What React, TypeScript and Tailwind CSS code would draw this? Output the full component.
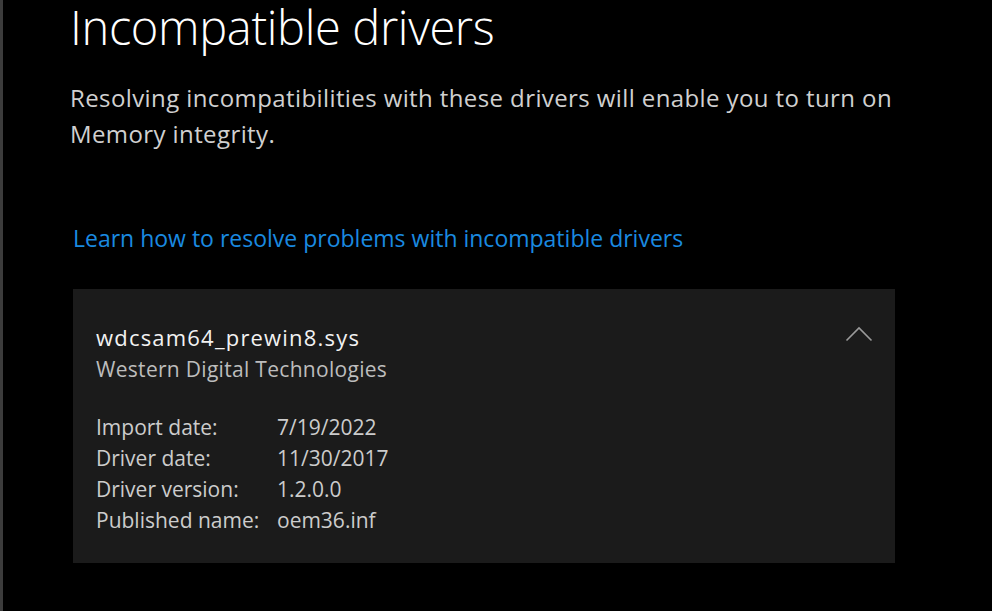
import React from "react";

const font = { fontFamily: '"Open Sans", "Noto Sans", sans-serif' };

function Row({ label, value }: { label: string; value: string }) {
  return (
    <div className="flex h-[31px] leading-[31px]">
      <div className="w-[181px] shrink-0">{label}</div>
      <div>{value}</div>
    </div>
  );
}

export default function App() {
  return (
    <div
      className="w-[992px] h-[611px] bg-black flex overflow-hidden"
      style={font}
    >
      <div className="w-[3px] shrink-0 bg-[#3c3c3c]" />
      <div className="flex flex-col pl-[67px] w-full">
        <h1 className="text-[47px] leading-[54px] tracking-[-0.35px] text-white font-light">
          Incompatible drivers
        </h1>
        <p className="mt-[26px] w-[860px] text-[24px] leading-[36px] tracking-[0.4px] text-[#d0d0d0]">
          Resolving incompatibilities with these drivers will enable you to turn
          on
          <br />
          Memory integrity.
        </p>
        <a className="mt-[71px] ml-[3px] text-[23px] leading-[30px] text-[#1a8ae0] cursor-pointer">
          Learn how to resolve problems with incompatible drivers
        </a>
        <div className="relative mt-[36px] ml-[3px] w-[822px] h-[274px] bg-[#1b1b1b] pl-[23px] pt-[33px]">
          <svg
            className="absolute right-[22px] top-[37px]"
            width="28"
            height="16"
            viewBox="0 0 28 16"
          >
            <path
              d="M1.5 14.5 L14 2 L26.5 14.5"
              fill="none"
              stroke="#9a9a9a"
              strokeWidth="1.6"
            />
          </svg>
          <div className="text-[22px] leading-[30px] tracking-[1.2px] text-[#f2f2f2]">
            wdcsam64_prewin8.sys
          </div>
          <div className="mt-[2px] text-[21px] leading-[30px] tracking-[0.3px] text-[#bdbdbd]">
            Western Digital Technologies
          </div>
          <div className="mt-[28px] text-[21px] text-[#cccccc]">
            <Row label="Import date:" value="7/19/2022" />
            <Row label="Driver date:" value="11/30/2017" />
            <Row label="Driver version:" value="1.2.0.0" />
            <Row label="Published name:" value="oem36.inf" />
          </div>
        </div>
      </div>
    </div>
  );
}
